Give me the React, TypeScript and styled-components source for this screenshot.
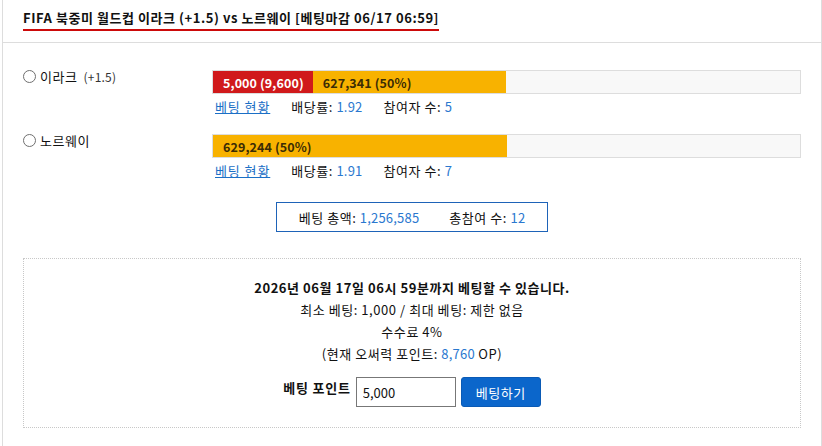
import styled, { createGlobalStyle } from 'styled-components'

const GlobalStyle = createGlobalStyle`
  html, body {
    margin: 0;
    padding: 0;
    overflow: hidden;
    background: #fff;
  }
  body {
    font-family: "Noto Sans CJK KR", "Noto Sans", sans-serif;
    font-size: 13px;
    letter-spacing: 0.55px;
    color: #111;
  }
`

const Panel = styled.div`
  box-sizing: border-box;
  width: 820px;
  margin-left: 2px;
  height: 446px;
  overflow: hidden;
  border-left: 1px solid #ddd;
  border-right: 1px solid #ddd;
`

const Header = styled.div`
  box-sizing: border-box;
  height: 43px;
  padding: 8px 20px 0;
  border-bottom: 1px solid #ddd;
`

const Title = styled.h1`
  display: inline-block;
  margin: 0;
  font-size: 13px;
  font-weight: 700;
  line-height: 20px;
  letter-spacing: 0.55px;
  padding-bottom: 1px;
  border-bottom: 2px solid #cc0a0a;
  color: #111;
`

const Body = styled.div`
  padding: 27px 20px 0;
`

const OptionRow = styled.div`
  display: grid;
  grid-template-columns: 189px 1fr;
  margin-bottom: 18px;
`

const OptionLabel = styled.label`
  display: flex;
  align-items: center;
  height: 13px;
  gap: 4px;
  font-size: 13px;
  line-height: 13px;
  cursor: pointer;
`

const Radio = styled.span`
  box-sizing: border-box;
  width: 13px;
  height: 13px;
  border: 1px solid #6f6f6f;
  border-radius: 50%;
  background: #fff;
  flex: none;
`

const Handicap = styled.span`
  font-size: 12px;
  letter-spacing: 0.2px;
  color: #333;
  margin-left: 2px;
`

const Bar = styled.div`
  box-sizing: border-box;
  display: flex;
  height: 24px;
  width: 589px;
  border: 1px solid #ddd;
  background: #f8f8f8;
`

const Segment = styled.div<{ $tone: 'red' | 'yellow' }>`
  display: flex;
  align-items: center;
  padding-left: 10px;
  box-sizing: border-box;
  white-space: nowrap;
  overflow: hidden;
  font-weight: 700;
  font-size: 12.5px;
  letter-spacing: 0.1px;
  background: ${(p) => (p.$tone === 'red' ? '#d0191b' : '#f8b200')};
  color: ${(p) => (p.$tone === 'red' ? '#fff' : '#3b2c05')};
`

const InfoRow = styled.div`
  display: flex;
  gap: 21px;
  padding-left: 3px;
  height: 20px;
  margin-top: 2px;
  align-items: center;
`

const Link = styled.a`
  color: #1b6fc6;
  text-decoration: underline;
  letter-spacing: 0.9px;
  cursor: pointer;
`

const Num = styled.span`
  color: #2a78cf;
  letter-spacing: 0.2px;
`

const TotalBox = styled.div`
  box-sizing: border-box;
  display: flex;
  justify-content: center;
  align-items: center;
  gap: 30px;
  width: 272px;
  height: 30px;
  margin: 22px auto 0;
  border: 1px solid #1e63b8;
`

const BetBox = styled.div`
  box-sizing: border-box;
  height: 170px;
  margin-top: 26px;
  padding-top: 18px;
  border: 1px dotted #c8c8c8;
  text-align: center;
  line-height: 22px;
`

const Notice = styled.p<{ $strong?: boolean }>`
  margin: 0;
  font-weight: ${(p) => (p.$strong ? 700 : 400)};
`

const BetForm = styled.div`
  display: flex;
  justify-content: center;
  align-items: flex-start;
  gap: 5px;
  margin-top: 12px;
`

const FieldLabel = styled.span`
  font-weight: 700;
  line-height: 22px;
  letter-spacing: 0.8px;
`

const PointInput = styled.input`
  box-sizing: border-box;
  width: 100px;
  height: 30px;
  padding: 0 6px;
  border: 1px solid #777;
  font-family: inherit;
  font-size: 13px;
  color: #111;
  outline: none;
`

const SubmitButton = styled.button`
  box-sizing: border-box;
  width: 80px;
  height: 30px;
  border: 1px solid #0a5ab5;
  border-radius: 3px;
  background: #0b66cb;
  color: #fff;
  font-family: inherit;
  font-size: 13px;
  letter-spacing: 0.55px;
  cursor: pointer;
`

type Option = {
  name: string
  handicap?: string
  mine?: string
  minePct?: number
  pool: string
  pct: number
  odds: string
  players: number
}

const options: Option[] = [
  { name: '이라크', handicap: '(+1.5)', mine: '5,000 (9,600)', minePct: 17, pool: '627,341 (50%)', pct: 50, odds: '1.92', players: 5 },
  { name: '노르웨이', pool: '629,244 (50%)', pct: 50, odds: '1.91', players: 7 },
]

function App() {
  return (
    <>
      <GlobalStyle />
      <Panel>
        <Header>
          <Title>FIFA 북중미 월드컵 이라크 (+1.5) vs 노르웨이 [베팅마감 06/17 06:59]</Title>
        </Header>
        <Body>
          {options.map((o) => (
            <OptionRow key={o.name}>
              <OptionLabel>
                <Radio />
                {o.name}
                {o.handicap && <Handicap>{o.handicap}</Handicap>}
              </OptionLabel>
              <div>
                <Bar>
                  {o.mine && (
                    <Segment $tone="red" style={{ width: `${o.minePct}%` }}>
                      {o.mine}
                    </Segment>
                  )}
                  <Segment $tone="yellow" style={{ width: `${o.pct - (o.minePct || 0)}%` }}>
                    {o.pool}
                  </Segment>
                </Bar>
                <InfoRow>
                  <Link>베팅 현황</Link>
                  <span>
                    배당률: <Num>{o.odds}</Num>
                  </span>
                  <span>
                    참여자 수: <Num>{o.players}</Num>
                  </span>
                </InfoRow>
              </div>
            </OptionRow>
          ))}
          <TotalBox>
            <span>
              베팅 총액: <Num>1,256,585</Num>
            </span>
            <span>
              총참여 수: <Num>12</Num>
            </span>
          </TotalBox>
          <BetBox>
            <Notice $strong>2026년 06월 17일 06시 59분까지 베팅할 수 있습니다.</Notice>
            <Notice>최소 베팅: 1,000 / 최대 베팅: 제한 없음</Notice>
            <Notice>수수료 4%</Notice>
            <Notice>
              (현재 오써력 포인트: <Num>8,760</Num> OP)
            </Notice>
            <BetForm>
              <FieldLabel>베팅 포인트</FieldLabel>
              <PointInput defaultValue="5,000" />
              <SubmitButton>베팅하기</SubmitButton>
            </BetForm>
          </BetBox>
        </Body>
      </Panel>
    </>
  )
}

export default App
